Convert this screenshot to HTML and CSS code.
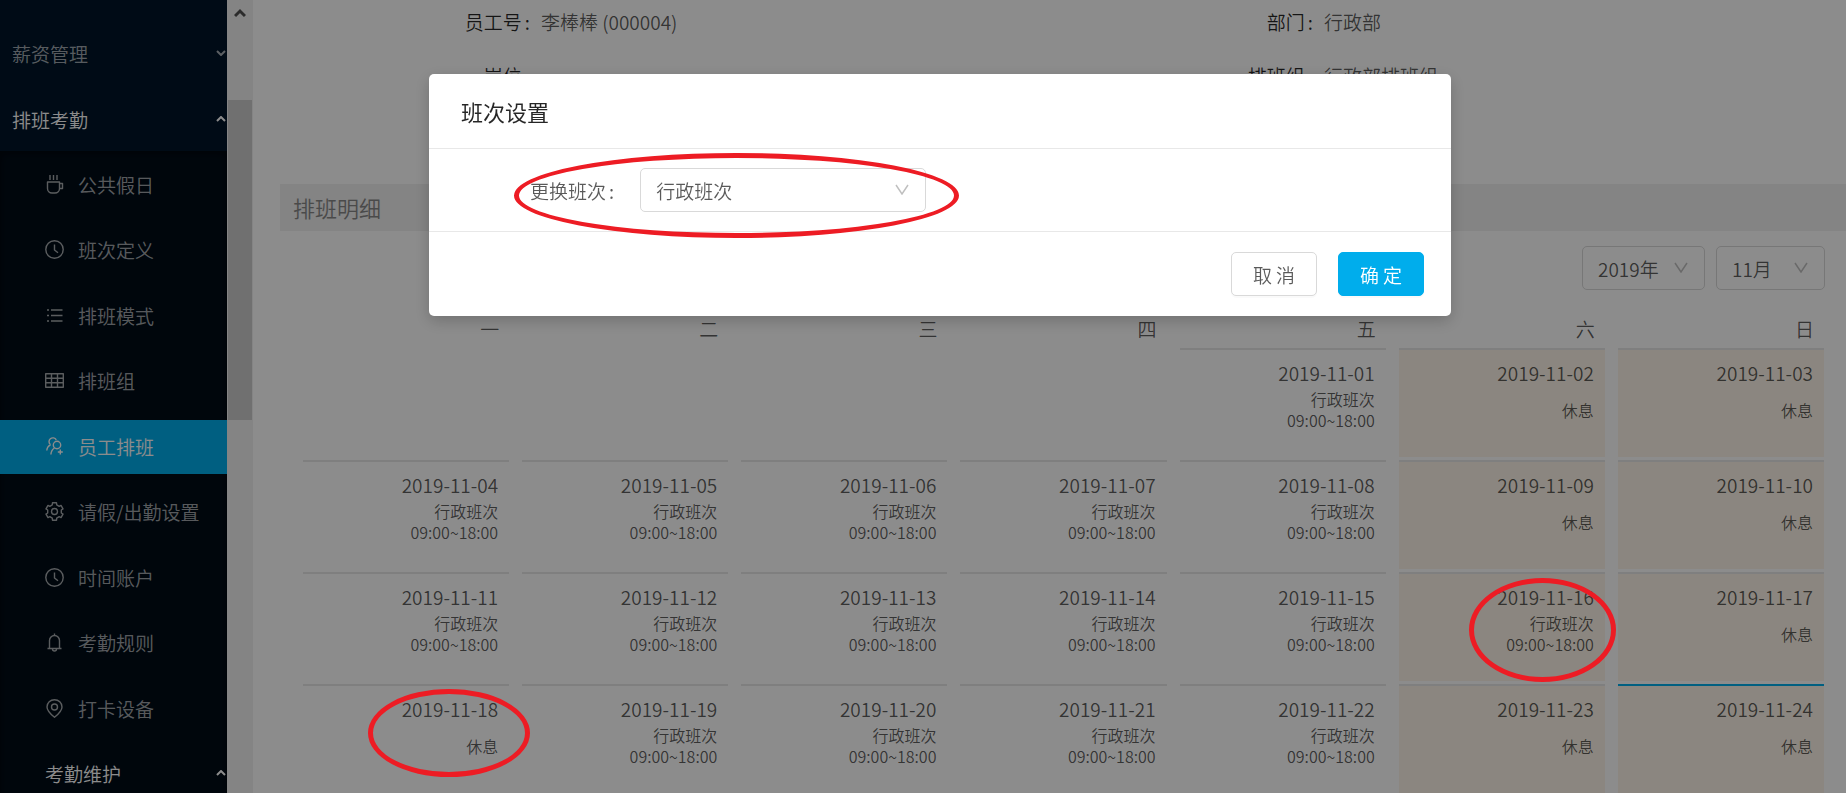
FILE: index.html
```
<!DOCTYPE html>
<html lang="zh-CN">
<head>
	<meta charset="utf-8">
	<title>员工排班</title>

	<link rel="stylesheet" href="styles.css">
</head>
<body>

<div class="page">

	<nav class="sidebar">
		<button class="group">薪资管理
			<svg class="chevron" viewBox="0 0 10 6"><path d="M1 1l4 4 4-4"/></svg>
		</button>
		<button class="group open">排班考勤
			<svg class="chevron" viewBox="0 0 10 6"><path d="M1 5l4-4 4 4"/></svg>
		</button>

		<ul class="submenu">
			<li><a href="#">
				<svg class="icon" viewBox="0 0 19 19"><path d="M5 0v5M8.500 0v5M12 0v5M2.500 7h12v6.500a4.500 4.500 0 0 1-4.500 4.500h-3a4.500 4.500 0 0 1-4.500-4.500zM14.500 8.500h3v5h-3"/></svg>
				公共假日</a></li>
			<li><a href="#">
				<svg class="icon" viewBox="0 0 19 19"><circle cx="9.500" cy="9.500" r="8.700"/><path d="M9.500 4.500v5.500l3.500 2.800"/></svg>
				班次定义</a></li>
			<li><a href="#">
				<svg class="icon" viewBox="0 0 19 19"><path d="M6 4h11.500M6 9.500h11.500M6 15h11.500M2 4h2M2 9.500h2M2 15h2"/></svg>
				排班模式</a></li>
			<li><a href="#">
				<svg class="icon" viewBox="0 0 19 19"><path d="M.7 2.700h17.600v13.600h-17.600zM.7 7.200h17.600M.7 11.800h17.600M6.500 2.700v13.600M12.500 2.700v13.600"/></svg>
				排班组</a></li>
			<li class="selected"><a href="#">
				<svg class="icon" viewBox="0 0 19 19"><circle cx="12" cy="8" r="3.700"/><path d="M5.500 7.800a3.900 3.900 0 1 1 5.800-5M5.500 7.800q-3.500 1.700-3.700 5.700M9.500 11q-3.300 2-3.600 6.500M15.300 12.500v5M12.800 15h5"/></svg>
				员工排班</a></li>
			<li><a href="#">
				<svg class="icon" viewBox="0 0 19 19"><circle cx="9.500" cy="9.500" r="3"/><path d="M7.300 2.800L7.500.8h4l.2 2 2.500 1.500 1.800-.9 2 3.500-1.700 1.100v3l1.700 1.100-2 3.500-1.800-.9-2.500 1.500-.2 2h-4l-.2-2-2.500-1.500-1.800.9-2-3.500L2.700 11V8L1 6.900l2-3.500 1.800.9z"/></svg>
				请假/出勤设置</a></li>
			<li><a href="#">
				<svg class="icon" viewBox="0 0 19 19"><circle cx="9.500" cy="9.500" r="8.700"/><path d="M9.500 4.500v5.500l3.500 2.800"/></svg>
				时间账户</a></li>
			<li><a href="#">
				<svg class="icon" viewBox="0 0 19 19"><path d="M9.500.5v2M4.500 15.500V7.500a5 5 0 0 1 10 0v8M2.500 15.500h14M7.500 16a2 2 0 0 0 4 0"/></svg>
				考勤规则</a></li>
			<li><a href="#">
				<svg class="icon" viewBox="0 0 19 19"><circle cx="9.500" cy="8" r="3"/><path d="M9.500 18.300C5 14.700 2 11.500 2 8a7.500 7.300 0 0 1 15 0c0 3.500-3 6.700-7.500 10.300z"/></svg>
				打卡设备</a></li>
			<li><button class="group open nested">考勤维护
				<svg class="chevron" viewBox="0 0 10 6"><path d="M1 5l4-4 4 4"/></svg>
			</button></li>
		</ul>
	</nav>

	<div class="scrollbar">
		<svg class="scroll-up" viewBox="0 0 12 10"><path d="M1 8l5-5 5 5"/></svg>
		<div class="thumb"></div>
	</div>

	<main class="content">
		<dl class="info">
			<div class="field"><dt>员工号<span class="colon">:</span></dt><dd>李棒棒 (000004)</dd></div>
			<div class="field"><dt>部门<span class="colon">:</span></dt><dd>行政部</dd></div>
			<div class="field"><dt>岗位<span class="colon">:</span></dt><dd></dd></div>
			<div class="field"><dt>排班组<span class="colon">:</span></dt><dd>行政部排班组</dd></div>
		</dl>

		<h2 class="section-title">排班明细</h2>

		<div class="toolbar">
			<div class="select year">
				<select aria-label="年份"><option>2019年</option></select>
				<svg class="arrow" viewBox="0 0 14 11"><path d="M1 1l6 9 6-9"/></svg>
			</div>
			<div class="select month">
				<select aria-label="月份"><option>11月</option></select>
				<svg class="arrow" viewBox="0 0 14 11"><path d="M1 1l6 9 6-9"/></svg>
			</div>
		</div>

		<div class="calendar">
			<table>
				<thead>
					<tr><th>一</th><th>二</th><th>三</th><th>四</th><th>五</th><th>六</th><th>日</th></tr>
				</thead>
				<tbody>
					<tr>
						<td></td>
						<td></td>
						<td></td>
						<td></td>
						<td><div class="day"><div class="date">2019-11-01</div><div class="shift">行政班次<br>09:00~18:00</div></div></td>
						<td><div class="day weekend"><div class="date">2019-11-02</div><div class="shift">休息</div></div></td>
						<td><div class="day weekend"><div class="date">2019-11-03</div><div class="shift">休息</div></div></td>
					</tr>
					<tr>
						<td><div class="day"><div class="date">2019-11-04</div><div class="shift">行政班次<br>09:00~18:00</div></div></td>
						<td><div class="day"><div class="date">2019-11-05</div><div class="shift">行政班次<br>09:00~18:00</div></div></td>
						<td><div class="day"><div class="date">2019-11-06</div><div class="shift">行政班次<br>09:00~18:00</div></div></td>
						<td><div class="day"><div class="date">2019-11-07</div><div class="shift">行政班次<br>09:00~18:00</div></div></td>
						<td><div class="day"><div class="date">2019-11-08</div><div class="shift">行政班次<br>09:00~18:00</div></div></td>
						<td><div class="day weekend"><div class="date">2019-11-09</div><div class="shift">休息</div></div></td>
						<td><div class="day weekend"><div class="date">2019-11-10</div><div class="shift">休息</div></div></td>
					</tr>
					<tr>
						<td><div class="day"><div class="date">2019-11-11</div><div class="shift">行政班次<br>09:00~18:00</div></div></td>
						<td><div class="day"><div class="date">2019-11-12</div><div class="shift">行政班次<br>09:00~18:00</div></div></td>
						<td><div class="day"><div class="date">2019-11-13</div><div class="shift">行政班次<br>09:00~18:00</div></div></td>
						<td><div class="day"><div class="date">2019-11-14</div><div class="shift">行政班次<br>09:00~18:00</div></div></td>
						<td><div class="day"><div class="date">2019-11-15</div><div class="shift">行政班次<br>09:00~18:00</div></div></td>
						<td><div class="day weekend"><div class="date">2019-11-16</div><div class="shift">行政班次<br>09:00~18:00</div><span class="mark mark-work"></span></div></td>
						<td><div class="day weekend"><div class="date">2019-11-17</div><div class="shift">休息</div></div></td>
					</tr>
					<tr>
						<td><div class="day"><div class="date">2019-11-18</div><div class="shift">休息</div><span class="mark mark-rest"></span></div></td>
						<td><div class="day"><div class="date">2019-11-19</div><div class="shift">行政班次<br>09:00~18:00</div></div></td>
						<td><div class="day"><div class="date">2019-11-20</div><div class="shift">行政班次<br>09:00~18:00</div></div></td>
						<td><div class="day"><div class="date">2019-11-21</div><div class="shift">行政班次<br>09:00~18:00</div></div></td>
						<td><div class="day"><div class="date">2019-11-22</div><div class="shift">行政班次<br>09:00~18:00</div></div></td>
						<td><div class="day weekend"><div class="date">2019-11-23</div><div class="shift">休息</div></div></td>
						<td><div class="day weekend today"><div class="date">2019-11-24</div><div class="shift">休息</div></div></td>
					</tr>
				</tbody>
			</table>
		</div>
	</main>

</div>

<div class="mask">
	<div class="modal" role="dialog" aria-labelledby="modal-title">
		<h1 class="modal-title" id="modal-title">班次设置</h1>
		<form class="modal-body">
			<label for="shift">更换班次<span class="colon">:</span></label>
			<div class="select shift-select">
				<select id="shift"><option>行政班次</option></select>
				<svg class="arrow" viewBox="0 0 14 11"><path d="M1 1l6 9 6-9"/></svg>
			</div>
			<span class="mark mark-form"></span>
		</form>
		<div class="modal-footer">
			<button class="btn">取 消</button>
			<button class="btn primary">确 定</button>
		</div>
	</div>
</div>

</body>
</html>
```
FILE: styles.css
```
*{
	margin: 0;
	padding: 0;
	box-sizing: border-box;
}

body{
	font-family: "Noto Sans CJK SC", sans-serif;
	font-size: 19px;
	font-weight: 350;
	color: rgba(0,0,0,.65);
	background: #fff;
	overflow: hidden;
}

button, select{
	font: inherit;
	color: inherit;
}

svg{
	fill: none;
	stroke: currentColor;
}

.page{
	display: flex;
	height: 100vh;
	overflow: hidden;
}

/* menu */
.sidebar{
	flex: none;
	width: 227px;
	padding-top: 27px;
	background: #001529;
	color: rgba(255,255,255,.65);
	overflow: hidden;
}

.group{
	display: flex;
	align-items: center;
	justify-content: space-between;
	width: 100%;
	height: 54px;
	margin-bottom: 12px;
	padding: 0 1px 2px 12px;
	border: 0;
	background: none;
}

.group.open{
	margin-bottom: 4px;
	color: #fff;
}

.group.nested{
	margin-bottom: 0;
	padding-left: 45px;
}

.chevron{
	width: 10px;
	height: 6px;
	stroke-width: 2;
}

.submenu{
	padding-top: 7px;
	list-style: none;
	background: #000c17;
	box-shadow: inset 0 2px 8px rgba(0,0,0,.45);
}

.submenu li{
	height: 54px;
	margin-bottom: 11px;
}

.submenu li:nth-child(even){
	margin-bottom: 12px;
}

.submenu a{
	display: flex;
	align-items: center;
	gap: 14px;
	height: 54px;
	padding: 0 0 1px 45px;
	color: inherit;
	text-decoration: none;
	white-space: nowrap;
}

.submenu .selected{
	background: #00adec;
	color: #fff;
}

.icon{
	flex: none;
	width: 19px;
	height: 19px;
	stroke-width: 1.4;
	stroke-linejoin: round;
}

.scrollbar{
	flex: none;
	width: 26px;
	padding: 8px 1px 0;
	background: #f1f1f1;
}

.scroll-up{
	display: block;
	width: 12px;
	height: 10px;
	margin: 0 auto 82px;
	color: #505050;
	stroke-width: 3;
}

.thumb{
	height: 320px;
	background: #cdcdcd;
}

/* content */
.content{
	flex: 1;
	padding-left: 27px;
}

.info{
	display: grid;
	grid-template-columns: 1fr 1fr;
	row-gap: 10px;
	line-height: 44px;
}

.field{
	display: flex;
}

.field dt{
	width: 33.333%;
	text-align: right;
	color: rgba(0,0,0,.85);
}

.colon{
	margin: 0 11px 0 3px;
}

.section-title{
	margin-top: 86px;
	padding-left: 13px;
	font-size: 22px;
	font-weight: 350;
	line-height: 47px;
	color: #888;
	background: #f0f0f0;
}

.toolbar{
	display: flex;
	justify-content: flex-end;
	gap: 11px;
	padding: 15px 21px 22px 0;
}

.select{
	position: relative;
}

.select select{
	display: block;
	width: 100%;
	height: 44px;
	padding: 0 15px;
	border: 1px solid #d9d9d9;
	border-radius: 5px;
	background: none;
	appearance: none;
}

.select .arrow{
	position: absolute;
	top: 16px;
	right: 17px;
	width: 14px;
	height: 11px;
	color: rgba(0,0,0,.25);
	stroke-width: 1.5;
	pointer-events: none;
}

.year{
	width: 123px;
}

.month{
	width: 109px;
}

.calendar{
	padding: 0 15px 0 17px;
}

.calendar table{
	width: 100%;
	table-layout: fixed;
	border-collapse: collapse;
}

.calendar th{
	padding: 0 17px 2px 0;
	font-weight: 350;
	line-height: 34px;
	text-align: right;
}

.day{
	position: relative;
	height: 109px;
	margin: 0 7px 3px 6px;
	padding: 8px 11px 0 0;
	border-top: 2px solid #e8e8e8;
	text-align: right;
}

.weekend{
	background: #fdf5e9;
}

.today{
	border-color: #00adec;
}

.date{
	line-height: 30px;
}

.shift{
	display: flex;
	flex-direction: column;
	justify-content: center;
	height: 44px;
	font-size: 16px;
	line-height: 21px;
}

/* modal */
.mask{
	position: fixed;
	inset: 0;
	padding: 74px 0 0 34px;
	background: rgba(0,0,0,.45);
}

.modal{
	width: 1022px;
	max-width: 100%;
	margin: 0 auto;
	border-radius: 5px;
	background: #fff;
	box-shadow: 0 5px 16px rgba(0,0,0,.2);
}

.modal-title{
	padding: 20px 32px;
	border-bottom: 1px solid #e8e8e8;
	font-size: 22px;
	font-weight: 400;
	line-height: 34px;
	color: rgba(0,0,0,.85);
}

.modal-body{
	position: relative;
	display: flex;
	align-items: center;
	padding: 19px 0 19px 101px;
}

.modal-body .colon{
	margin-right: 26px;
}

.shift-select{
	width: 286px;
}

.modal-footer{
	display: flex;
	justify-content: flex-end;
	gap: 21px;
	padding: 20px 27px;
	border-top: 1px solid #e8e8e8;
}

.btn{
	width: 86px;
	height: 44px;
	border: 1px solid #d9d9d9;
	border-radius: 5px;
	background: #fff;
	box-shadow: 0 2px 0 rgba(0,0,0,.02);
}

.btn.primary{
	border-color: #00adec;
	background: #00adec;
	color: #fff;
}

/* red rings */
.mark{
	position: absolute;
	z-index: 1;
	border: 5px solid #ed1c24;
	border-radius: 50%;
	pointer-events: none;
}

.mark-form{
	top: 4px;
	left: 85px;
	width: 445px;
	height: 85px;
}

.mark-work{
	top: 4px;
	right: -11px;
	width: 147px;
	height: 104px;
}

.mark-rest{
	top: 3px;
	right: -21px;
	width: 162px;
	height: 88px;
}
```
